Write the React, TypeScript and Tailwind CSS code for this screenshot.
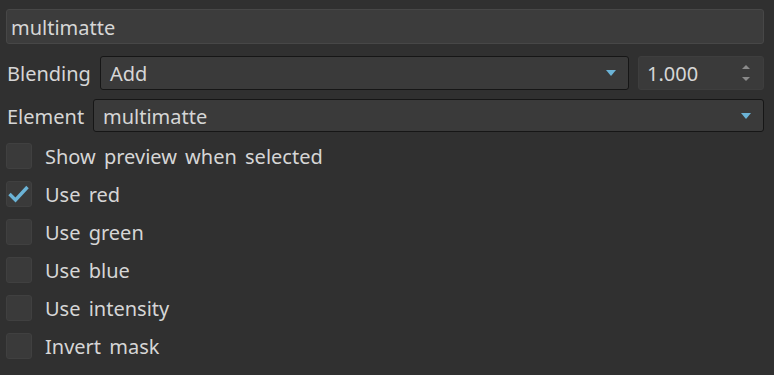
const font = { fontFamily: '"Noto Sans", "Open Sans", sans-serif' }

function Arrow() {
  return (
    <svg width="10" height="6" viewBox="0 0 10 6" className="shrink-0">
      <path d="M0 0 H10 L5 6 Z" fill="#6bb3d6" />
    </svg>
  )
}

function Combo({ value }: { value: string }) {
  return (
    <div className="flex flex-1 items-center justify-between h-full rounded-[3px] border border-[#161616] bg-[#3a3a3a] pl-[9px] pr-[12px]">
      <span className="pt-[2px]">{value}</span>
      <Arrow />
    </div>
  )
}

function Checkbox({ label, checked }: { label: string; checked?: boolean }) {
  return (
    <div className="flex items-center h-[38px] gap-[13px]">
      <div className="relative w-[26px] h-[26px] rounded-[3px] border border-[#404040] bg-[#3a3a3a]">
        {checked && (
          <svg width="26" height="26" viewBox="0 0 26 26" className="absolute -left-px -top-px">
            <path d="M3.5 13 L9.5 19 L21.5 6" fill="none" stroke="#6bb3d6" strokeWidth="3.4" />
          </svg>
        )}
      </div>
      <span className="pt-[2px]">{label}</span>
    </div>
  )
}

export default function App() {
  const options = [
    { label: "Show preview when selected" },
    { label: "Use red", checked: true },
    { label: "Use green" },
    { label: "Use blue" },
    { label: "Use intensity" },
    { label: "Invert mask" },
  ]

  return (
    <div
      className="w-[774px] h-[375px] bg-[#303030] text-[#d6d6d6] text-[20px] [word-spacing:3px] pl-[6px] pr-[10px] pt-[9px] overflow-hidden"
      style={font}
    >
      <div className="flex items-center h-[35px] rounded-[3px] border border-[#474747] bg-[#3c3c3c] px-[4px] pt-[2px]">
        multimatte
      </div>

      <div className="flex items-center h-[34px] mt-[12px]">
        <span className="w-[94px] pl-[1px] pt-[2px] shrink-0">Blending</span>
        <Combo value="Add" />
        <div className="flex items-center justify-between h-full w-[126px] ml-[9px] rounded-[3px] border border-[#3e3e3e] bg-[#3a3a3a] pl-[8px] pr-[13px]">
          <span className="pt-[2px]">1.000</span>
          <div className="flex flex-col gap-[8px]">
            <svg width="8" height="4" viewBox="0 0 8 4">
              <path d="M0 4 L4 0 L8 4 Z" fill="#8a8a8a" />
            </svg>
            <svg width="8" height="4" viewBox="0 0 8 4">
              <path d="M0 0 H8 L4 4 Z" fill="#8a8a8a" />
            </svg>
          </div>
        </div>
      </div>

      <div className="flex items-center h-[33px] mt-[9px]">
        <span className="w-[87px] pl-[1px] pt-[2px] shrink-0">Element</span>
        <Combo value="multimatte" />
      </div>

      <div className="flex flex-col mt-[5px]">
        {options.map((o) => (
          <Checkbox key={o.label} label={o.label} checked={o.checked} />
        ))}
      </div>
    </div>
  )
}
